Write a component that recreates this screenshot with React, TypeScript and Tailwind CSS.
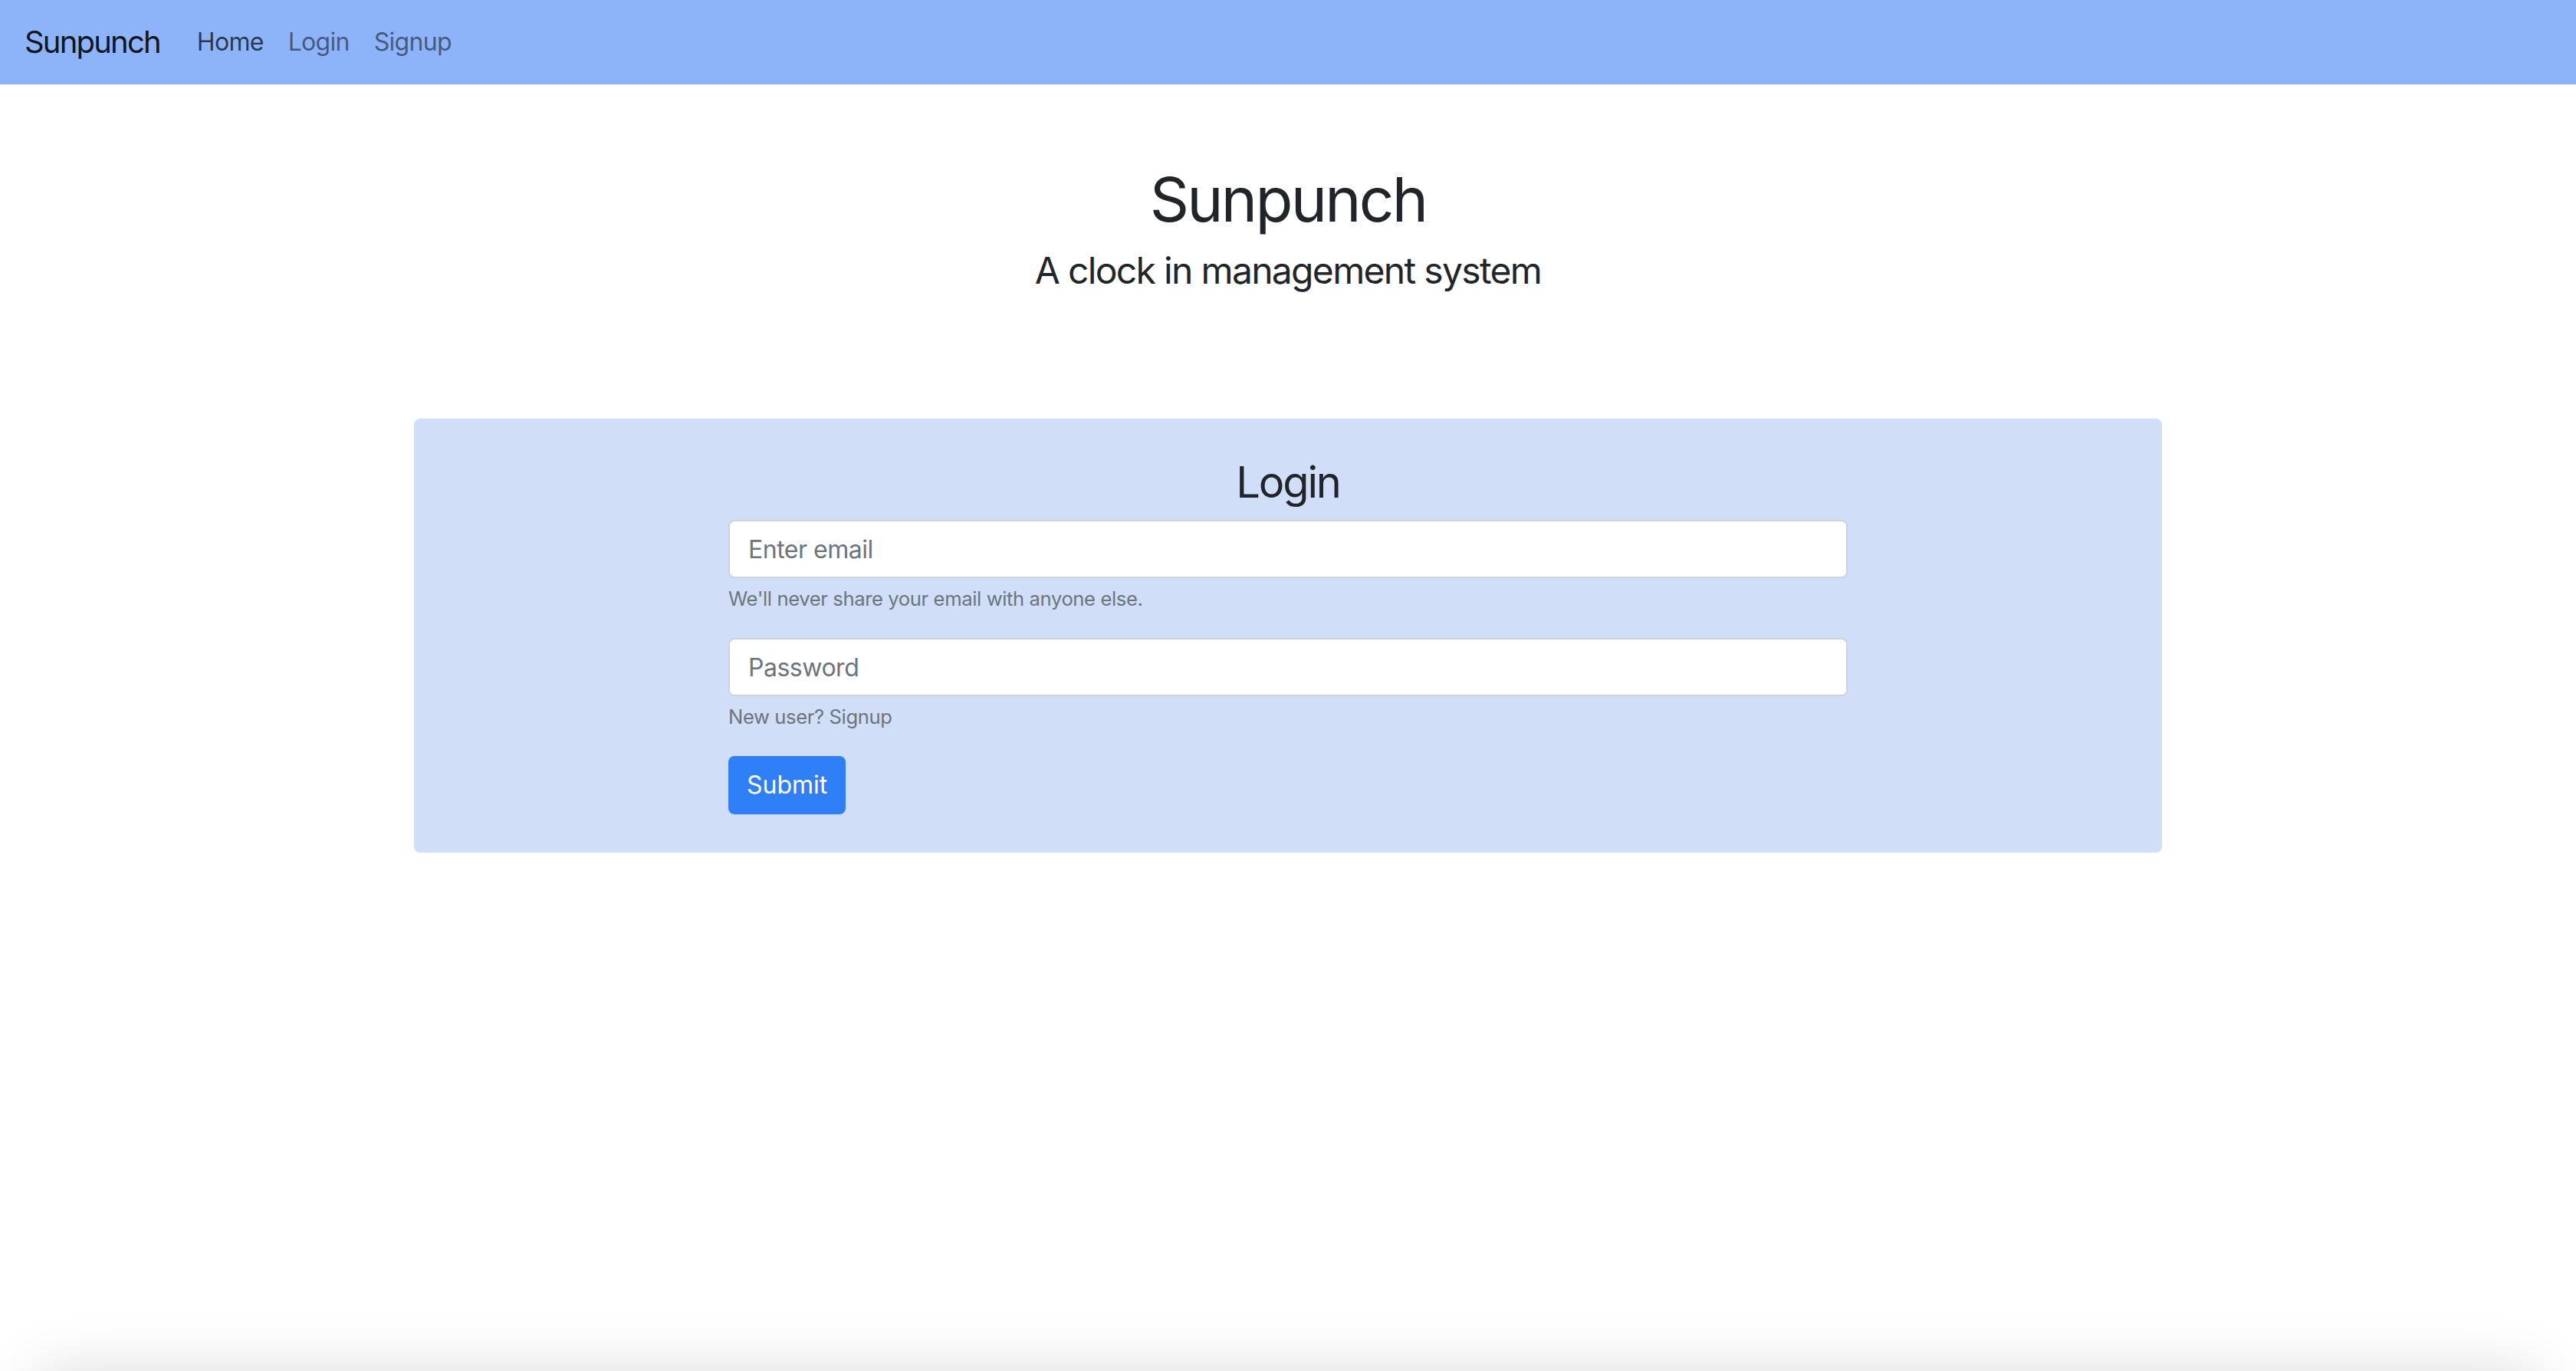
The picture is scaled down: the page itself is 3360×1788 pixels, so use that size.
import { useState } from 'react';

const font = "font-['Inter','Liberation_Sans',sans-serif]";

function NavBar() {
    return (
        <nav className="h-[110px] bg-[#8db3f8] flex items-center px-[32px]">
            <a href="#" className="text-[40px] leading-[60px] tracking-[-0.045em] text-black/90 mr-[32px]">Sunpunch</a>
            <div className="flex items-center text-[32px] leading-[48px] tracking-[-0.022em]">
                <a href="#" className="px-[16px] text-black/70">Home</a>
                <a href="#" className="px-[16px] text-black/50">Login</a>
                <a href="#" className="px-[16px] text-black/50">Signup</a>
            </div>
        </nav>
    );
}

export default function App() {
    const [email, setEmail] = useState('');
    const [password, setPassword] = useState('');

    const inputClass = "w-full h-[76px] px-[24px] bg-white border-2 border-[#ced4da] rounded-[8px] text-[32px] tracking-[-0.015em] text-[#495057] placeholder:text-[#6c757d] focus:outline-none";
    const helpClass = "block mt-[8px] text-[25.6px] leading-[38px] tracking-[-0.015em] text-[#6c757d]";

    return (
        <div className={`min-h-screen bg-white text-[#212529] ${font}`}>
            <NavBar />

            {/* judul */}
            <div className="pt-[102px] text-center">
                <h1 className="text-[80px] leading-[96px] tracking-[-0.034em] font-normal mb-[16px]">Sunpunch</h1>
                <h4 className="text-[48px] leading-[58px] tracking-[-0.035em] font-normal">A clock in management system</h4>
            </div>

            <div className="mt-[164px] mx-auto w-[2280px] bg-[#d0def8] rounded-[8px] pt-[50px] pb-[50px]">
                <form className="w-[1460px] mx-auto" onSubmit={(e) => e.preventDefault()}>
                    <h3 className="text-center text-[56px] leading-[67px] tracking-[-0.038em] font-normal mb-[15px]">Login</h3>

                    <div className="mb-[32px]">
                        <input type="email" placeholder="Enter email" className={inputClass} value={email} onChange={(e) => setEmail(e.target.value)} />
                        <small className={helpClass}>We'll never share your email with anyone else.</small>
                    </div>

                    <div className="mb-[32px]">
                        <input type="password" placeholder="Password" className={inputClass} value={password} onChange={(e) => setPassword(e.target.value)} />
                        <small className={helpClass}>New user? <a href="#">Signup</a></small>
                    </div>

                    <button type="submit" className="h-[76px] px-[24px] bg-[#2f7ff6] text-white text-[32px] rounded-[8px]">Submit</button>
                </form>
            </div>

            {/* bayangan jendela di bawah */}
            <div className="fixed left-[40px] right-[40px] top-[1788px] h-[300px] rounded-[40px] shadow-[0_0_80px_rgba(0,0,0,0.14)]" />
        </div>
    );
}
